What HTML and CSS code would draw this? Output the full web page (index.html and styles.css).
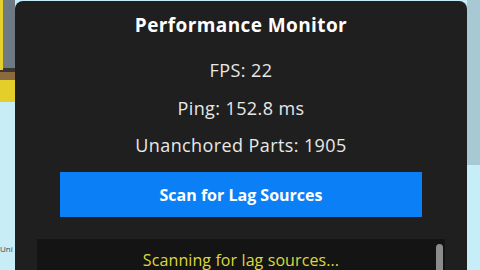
FILE: index.html
```html
<!DOCTYPE html>
<html>
<head>
<meta charset="utf-8">
<link rel="stylesheet" href="styles.css">
</head>
<body>
<div class="scene-left"><span class="sign">Uni</span></div>
<main class="panel">
  <h1 class="title">Performance Monitor</h1>
  <div class="stats">
    <p class="stat">FPS: 22</p>
    <p class="stat">Ping: 152.8 ms</p>
    <p class="stat">Unanchored Parts: 1905</p>
  </div>
  <button class="scan-btn">Scan for Lag Sources</button>
  <div class="log">
    <p class="log-line">Scanning for lag sources...</p>
    <div class="scrollbar"></div>
  </div>
</main>
<div class="scene-right"></div>
</body>
</html>
```
FILE: styles.css
```css
html, body {
  margin: 0;
  height: 270px;
  overflow: hidden;
}
body {
  display: flex;
  background: #c6eef8;
  font-family: "Open Sans", "Noto Sans", sans-serif;
}
.scene-left {
  width: 15px;
  flex: none;
  display: flex;
  flex-direction: column;
  justify-content: flex-end;
  padding-bottom: 16px;
  box-sizing: border-box;
  overflow: hidden;
  background:
    linear-gradient(#e5d12c, #e5d12c) 0 0 / 3px 70px no-repeat,
    linear-gradient(#6d7a84, #6d7a84) 3px 0 / 12px 68px no-repeat,
    linear-gradient(#3a3630, #3a3630) 0 68px / 15px 4px no-repeat,
    linear-gradient(#8b6a42, #8b6a42) 0 72px / 15px 8px no-repeat,
    linear-gradient(#e4cf2a, #e4cf2a) 0 80px / 15px 22px no-repeat,
    #c9edf6;
}
.sign {
  font-size: 8px;
  color: #3a4448;
  white-space: nowrap;
  line-height: 10px;
}
.scene-right {
  flex: 1;
  background:
    linear-gradient(#a6c9d4, #a6c9d4) 0 0 / 100% 165px no-repeat,
    #c6eef8;
}
.panel {
  width: 452px;
  height: 269px;
  flex: none;
  margin-top: 1px;
  background: #1f1f1f;
  border-radius: 8px 8px 0 0;
  display: flex;
  flex-direction: column;
  align-items: center;
}
.title {
  margin: 2px 0 0;
  font-size: 19px;
  font-weight: 700;
  letter-spacing: 0.4px;
  line-height: 44px;
  color: #ffffff;
}
.stats {
  margin-top: 5px;
  display: flex;
  flex-direction: column;
  align-items: center;
}
.stat {
  margin: 0;
  font-size: 18px;
  letter-spacing: 0.4px;
  line-height: 37.5px;
  color: #e8e8e8;
}
.scan-btn {
  margin-top: 7px;
  align-self: stretch;
  margin-left: 45px;
  margin-right: 45px;
  height: 45px;
  padding-top: 3px;
  flex: none;
  border: none;
  background: #0b7ff5;
  color: #ffffff;
  font-family: inherit;
  font-size: 16px;
  font-weight: 700;
}
.log {
  margin-top: 22px;
  align-self: stretch;
  margin-left: 22px;
  margin-right: 22px;
  flex: 1;
  background: #141414;
  display: flex;
  justify-content: center;
  position: relative;
}
.log-line {
  margin: 12px 0 0;
  font-size: 16px;
  letter-spacing: 0.1px;
  line-height: 18px;
  color: #dcd83a;
}
.scrollbar {
  position: absolute;
  right: 2px;
  top: 5px;
  width: 7px;
  height: 40px;
  border-radius: 4px;
  background: #8c8c8c;
}
```
